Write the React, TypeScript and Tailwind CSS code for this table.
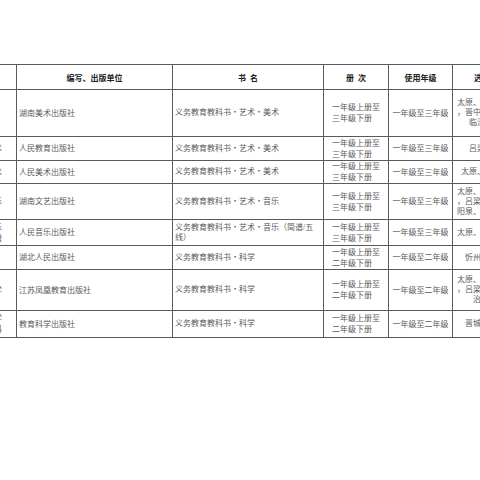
const rows = [
  {
    h: 'h-[46px]',
    side: '',
    unit: '湖南美术出版社',
    book: ['义务教育教科书・艺术・美术'],
    vol: ['一年级上册至', '三年级下册'],
    grade: '一年级至三年级',
    area: ['太原、大同、朔州、', '，晋中、忻州、运城', '临汾、阳泉等'],
  },
  {
    h: 'h-[23px]',
    side: '美术',
    unit: '人民教育出版社',
    book: ['义务教育教科书・艺术・美术'],
    vol: ['一年级上册至', '三年级下册'],
    grade: '一年级至三年级',
    area: ['吕梁、晋城市'],
  },
  {
    h: 'h-[22px]',
    side: '美术',
    unit: '人民美术出版社',
    book: ['义务教育教科书・艺术・美术'],
    vol: ['一年级上册至', '三年级下册'],
    grade: '一年级至三年级',
    area: ['太原、大同、长治'],
  },
  {
    h: 'h-[35px]',
    side: '音乐',
    unit: '湖南文艺出版社',
    book: ['义务教育教科书・艺术・音乐'],
    vol: ['一年级上册至', '三年级下册'],
    grade: '一年级至三年级',
    area: ['太原、大同、朔州、', '，吕梁、晋中、运城', '阳泉、长治、晋城、'],
  },
  {
    h: 'h-[25px]',
    side: '音乐,简谱',
    unit: '人民音乐出版社',
    book: ['义务教育教科书・艺术・音乐（简谱/五', '线）'],
    vol: ['一年级上册至', '三年级下册'],
    grade: '一年级至三年级',
    area: ['太原、大同、朔州、'],
  },
  {
    h: 'h-[23px]',
    side: '',
    unit: '湖北人民出版社',
    book: ['义务教育教科书・科学'],
    vol: ['一年级上册至', '二年级下册'],
    grade: '一年级至二年级',
    area: ['忻州市、阳泉市'],
  },
  {
    h: 'h-[40px]',
    side: '科学',
    unit: '江苏凤凰教育出版社',
    book: ['义务教育教科书・科学'],
    vol: ['一年级上册至', '二年级下册'],
    grade: '一年级至二年级',
    area: ['太原、大同、朔州、', '，吕梁、晋中、运城', '治、晋城市'],
  },
  {
    h: 'h-[26px]',
    side: '科学,教科',
    unit: '教育科学出版社',
    book: ['义务教育教科书・科学'],
    vol: ['一年级上册至', '二年级下册'],
    grade: '一年级至二年级',
    area: ['晋城市、长治市'],
  },
];

function Lines({ items }: { items: string[] }) {
  return (
    <>
      {items.map((t, i) => (
        <div key={i}>{t}</div>
      ))}
    </>
  );
}

export default function App() {
  return (
    <div
      className="w-[480px] h-[480px] overflow-hidden bg-white pt-[64px]"
      style={{ fontFamily: '"Liberation Serif", "Noto Sans CJK SC", serif' }}
    >
      <div className="ml-[-40px] w-max grid grid-cols-[56px_155px_150px_64px_63px_80px] gap-px bg-[#5a5a5a] py-px text-[8px] leading-[11px] text-[#5a5a5a]">
        {/* Header */}
        <div className="h-[24px] bg-white" />
        <div className="h-[24px] bg-white flex items-center justify-center pt-[3px] font-bold text-[#222]">编写、出版单位</div>
        <div className="h-[24px] bg-white flex items-center justify-center pt-[3px] font-bold text-[#222]">书&nbsp;&nbsp;名</div>
        <div className="h-[24px] bg-white flex items-center justify-center pt-[3px] font-bold text-[#222]">册&nbsp;&nbsp;次</div>
        <div className="h-[24px] bg-white flex items-center justify-center pt-[3px] font-bold text-[#222]">使用年级</div>
        <div className="h-[24px] bg-white flex items-center justify-center pt-[3px] pl-[10px] font-bold text-[#222] whitespace-nowrap">选用地区范围</div>

        {rows.map((r, i) => (
          <div key={i} className="contents">
            <div className={`${r.h} bg-white flex flex-col items-end justify-center pr-[14px]`}>
              <Lines items={r.side ? r.side.split(',') : []} />
            </div>
            <div className={`${r.h} bg-white flex items-center pl-[2px]`}>{r.unit}</div>
            <div className={`${r.h} bg-white flex flex-col justify-center pl-[2px] leading-[10px]`}>
              <Lines items={r.book} />
            </div>
            <div className={`${r.h} bg-white flex items-center justify-center`}>
              <div className="text-left">
                <Lines items={r.vol} />
              </div>
            </div>
            <div className={`${r.h} bg-white flex items-center justify-center`}>{r.grade}</div>
            <div className={`${r.h} bg-white flex flex-col justify-center text-center px-[2px] whitespace-nowrap leading-[10px]`}>
              <Lines items={r.area} />
            </div>
          </div>
        ))}
      </div>
    </div>
  );
}
